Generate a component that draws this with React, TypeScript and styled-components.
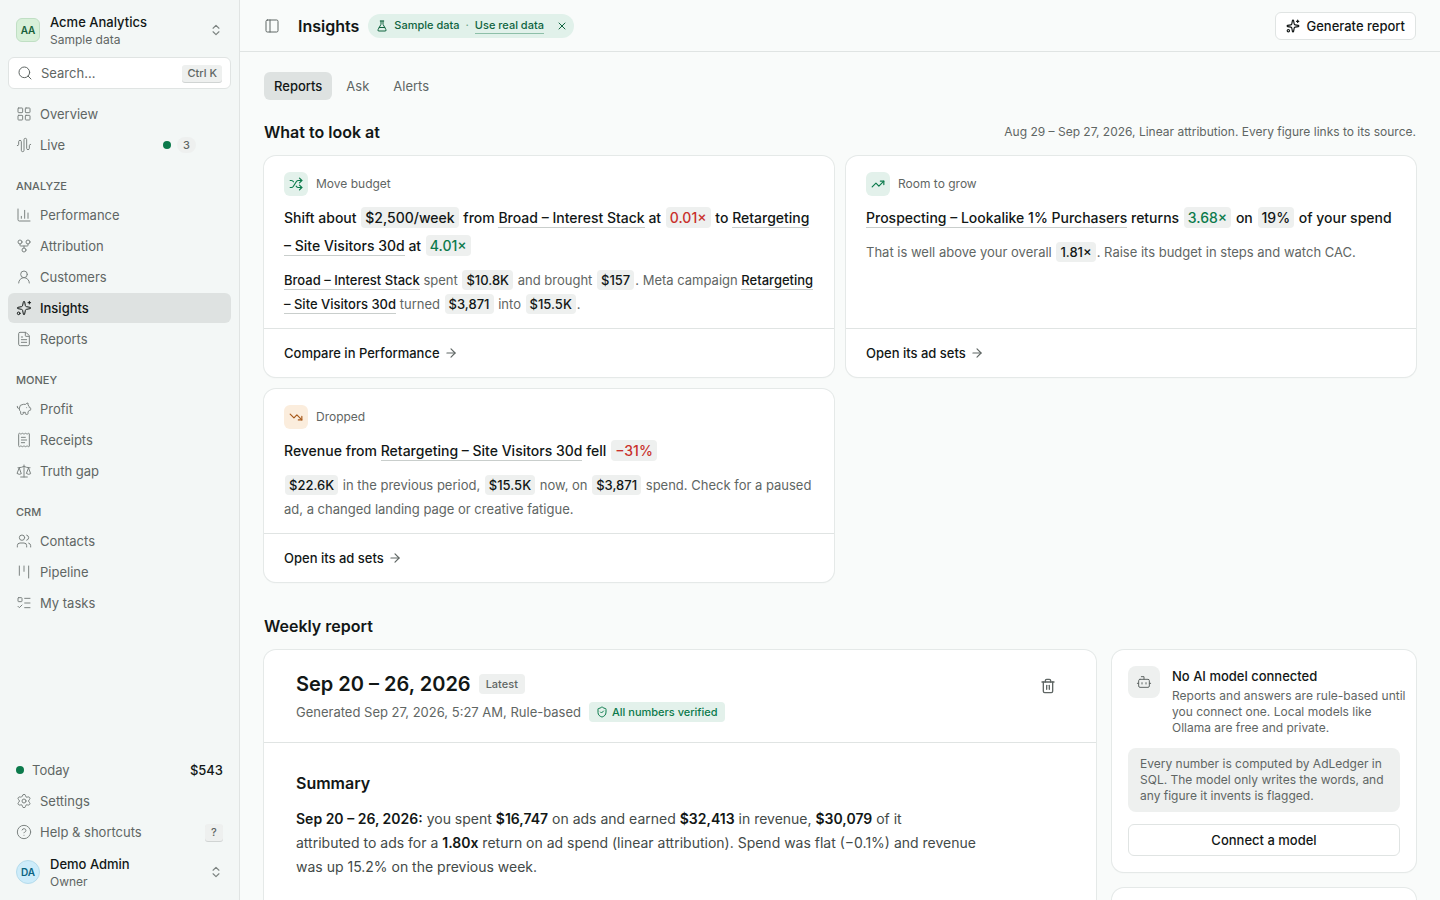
import React from "react";
import styled, { createGlobalStyle, css } from "styled-components";
import {
  ArrowRight, AudioWaveform, Bot, ChartColumn, ChevronsUpDown, CircleHelp, FileText, FlaskConical, GitFork,
  Kanban, LayoutGrid, ListTodo, PanelLeft, PiggyBank, ReceiptText, Scale, Search, Settings, ShieldCheck,
  Shuffle, Sparkles, Trash2, TrendingDown, TrendingUp, UserRound, Users, X,
} from "lucide-react";

const c = {
  bg: "#f9fbfa",
  side: "#f3f7f6",
  line: "#e0e4e3",
  active: "#dee2e1",
  chip: "#eef0ef",
  ink: "#121716",
  muted: "#5f6664",
  icon: "#7c8381",
  green: "#0b7a4b",
  greenSoft: "#e3f1eb",
  red: "#c9302c",
};

const Global = createGlobalStyle`
  *, *::before, *::after { box-sizing: border-box; }
  body { margin: 0; background: ${c.bg}; color: ${c.ink}; font: 400 13px/20px Inter, "Liberation Sans", sans-serif; }
  h1, h2, h3, p, ul { margin: 0; padding: 0; }
  ul { list-style: none; }
  a { color: inherit; text-decoration: none; }
  button, input { font: inherit; color: inherit; }
  button { border: 0; background: none; padding: 0; cursor: pointer; }
  svg { flex: none; display: block; }
`;

const Shell = styled.div`
  display: grid;
  grid-template-columns: 240px minmax(0, 1fr);
  height: 100vh;
  overflow: hidden;
`;

const Sidebar = styled.aside`
  display: flex;
  flex-direction: column;
  padding: 8px;
  background: ${c.side};
  border-right: 1px solid ${c.line};
`;

const Account = styled.button<{ $height: number }>`
  display: flex;
  align-items: center;
  gap: 10px;
  height: ${(p) => p.$height}px;
  padding: 0 8px;
  text-align: left;
  > svg { color: ${c.icon}; }
`;

const Avatar = styled.span<{ $round?: boolean }>`
  display: grid;
  place-items: center;
  width: 24px;
  height: 24px;
  font-size: 10px;
  font-weight: 600;
  border: 1px solid ${(p) => (p.$round ? "#b5dcec" : "#c0dfc4")};
  border-radius: ${(p) => (p.$round ? "50%" : "6px")};
  background: ${(p) => (p.$round ? "#cdecfa" : "#d8f0d9")};
  color: ${(p) => (p.$round ? "#0b6482" : "#17603a")};
`;

const AccountText = styled.span`
  flex: 1;
  display: flex;
  flex-direction: column;
  padding-top: 2px;
  line-height: 18px;
  strong { font-weight: 500; }
  small { font-size: 12px; color: ${c.muted}; }
`;

const SearchBox = styled.label`
  display: flex;
  align-items: center;
  gap: 8px;
  height: 32px;
  margin: 5px 0 10px;
  padding: 0 8px;
  border: 1px solid ${c.line};
  border-radius: 6px;
  background: #fff;
  color: ${c.muted};
  input {
    flex: 1;
    min-width: 0;
    padding: 0;
    border: 0;
    outline: 0;
    background: none;
    &::placeholder { color: ${c.muted}; opacity: 1; }
  }
`;

const Kbd = styled.kbd`
  display: grid;
  place-items: center;
  height: 17px;
  min-width: 18px;
  padding: 0 5px;
  border-radius: 3px;
  background: ${c.chip};
  box-shadow: 0 1px 0 #d0d4d3;
  font: 500 11px/16px Inter, sans-serif;
  color: ${c.muted};
`;

const NavGroup = styled.ul`
  display: flex;
  flex-direction: column;
  gap: 1px;
`;

const NavLabel = styled.h2`
  height: 28px;
  margin-top: 12px;
  padding: 0 8px;
  font-size: 11px;
  font-weight: 500;
  line-height: 28px;
  color: ${c.muted};
  text-transform: uppercase;
`;

const NavItem = styled.a<{ $active?: boolean }>`
  display: flex;
  align-items: center;
  gap: 8px;
  height: 30px;
  padding: 0 8px;
  border-radius: 6px;
  color: ${c.muted};
  > svg { color: ${c.icon}; }
  ${(p) => p.$active && css`
    background: ${c.active};
    color: ${c.ink};
    font-weight: 500;
    > svg { color: ${c.ink}; }
  `}
`;

const NavText = styled.span`
  flex: 1;
  padding-bottom: 1px;
`;

const Dot = styled.span`
  width: 8px;
  height: 8px;
  border-radius: 50%;
  background: ${c.green};
`;

const Count = styled.span`
  height: 16px;
  margin: 0 27px 0 -2px;
  padding: 0 6px;
  border-radius: 8px;
  background: ${c.chip};
  font-size: 11px;
  font-weight: 500;
  line-height: 16px;
`;

const Amount = styled.span`
  font-weight: 500;
  color: ${c.ink};
`;

const Foot = styled.div`
  margin-top: auto;
  margin-bottom: 5px;
`;

const Main = styled.main`
  display: flex;
  flex-direction: column;
  min-width: 0;
  min-height: 0;
`;

const TopBar = styled.header`
  flex: none;
  display: flex;
  align-items: center;
  height: 52px;
  padding: 0 24px;
  border-bottom: 1px solid ${c.line};
`;

const IconButton = styled.button<{ $size: number }>`
  flex: none;
  display: grid;
  place-items: center;
  width: ${(p) => p.$size}px;
  height: ${(p) => p.$size}px;
  color: ${c.muted};
`;

const PageTitle = styled.h1`
  margin: 0 9px 0 18px;
  font-size: 16px;
  font-weight: 600;
  line-height: 24px;
`;

const SamplePill = styled.div`
  display: flex;
  align-items: center;
  gap: 6px;
  height: 24px;
  padding: 0 4px 0 8px;
  border-radius: 12px;
  background: #e1f1ea;
  color: #10643f;
  font-size: 11px;
  font-weight: 500;
  line-height: 15px;
  a { border-bottom: 1px solid #8dbfa8; }
  button { color: inherit; margin-left: 4px; }
`;

const Separator = styled.span`
  color: #6fa88d;
`;

const OutlineButton = styled.button`
  display: flex;
  align-items: center;
  justify-content: center;
  gap: 6px;
  height: 28px;
  padding: 0 10px;
  border: 1px solid ${c.line};
  border-radius: 6px;
  background: #fff;
  font-weight: 500;
`;

const GenerateButton = styled(OutlineButton)`
  margin-left: auto;
`;

const ConnectButton = styled(OutlineButton)`
  width: 100%;
  height: 32px;
`;

const Content = styled.div`
  flex: 1;
  min-height: 0;
  overflow: hidden;
  padding: 20px 24px;
`;

const Tabs = styled.div`
  display: flex;
  gap: 4px;
`;

const Tab = styled.button<{ $active?: boolean }>`
  height: 28px;
  padding: 0 10px;
  border-radius: 6px;
  background: ${(p) => (p.$active ? c.active : "transparent")};
  color: ${(p) => (p.$active ? c.ink : c.muted)};
  font-weight: ${(p) => (p.$active ? 500 : 400)};
`;

const SectionHead = styled.div<{ $top: number }>`
  display: flex;
  align-items: center;
  justify-content: space-between;
  margin: ${(p) => p.$top}px 0 12px;
  h2 { font-size: 16px; font-weight: 600; line-height: 24px; }
  p { font-size: 12px; color: ${c.muted}; }
`;

const card = css`
  border-radius: 12px;
  background: #fff;
  box-shadow: 0 0 0 1px #e5e9e8, 0 1px 2px rgba(18, 23, 22, 0.06);
`;

const CardGrid = styled.div`
  display: grid;
  grid-template-columns: repeat(2, minmax(0, 1fr));
  gap: 12px;
`;

const InsightCard = styled.article`
  ${card}
  display: flex;
  flex-direction: column;
`;

const InsightBody = styled.div`
  flex: 1;
  display: flex;
  flex-direction: column;
  gap: 8px;
  padding: 16px 20px 12px;
`;

const Kind = styled.div<{ $warm?: boolean }>`
  display: flex;
  align-items: center;
  gap: 8px;
  font-size: 12px;
  color: ${c.muted};
  span {
    display: grid;
    place-items: center;
    width: 24px;
    height: 24px;
    border-radius: 6px;
    background: ${(p) => (p.$warm ? "#fbeddd" : c.greenSoft)};
    color: ${(p) => (p.$warm ? "#a85a1c" : c.green)};
  }
`;

const Headline = styled.h3`
  font-size: 14px;
  font-weight: 500;
  line-height: 28px;
`;

const Detail = styled.p`
  line-height: 24px;
  color: ${c.muted};
`;

const Figure = styled.span<{ $tone?: "good" | "bad" }>`
  margin: 0 1px;
  padding: 2px 4px;
  border-radius: 4px;
  background: ${c.chip};
  font-weight: 500;
  white-space: nowrap;
  color: ${(p) => (p.$tone === "good" ? c.green : p.$tone === "bad" ? c.red : c.ink)};
`;

const Source = styled.a`
  padding-bottom: 1px;
  border-bottom: 1px solid #c9cecc;
  color: ${c.ink};
  font-weight: 500;
`;

const CardLink = styled.a`
  display: flex;
  align-items: center;
  gap: 4px;
  height: 49px;
  padding: 0 20px;
  border-top: 1px solid ${c.line};
  font-weight: 500;
  svg { color: ${c.muted}; }
`;

const ReportGrid = styled.div`
  display: grid;
  grid-template-columns: minmax(0, 1fr) 304px;
  gap: 16px;
`;

const Report = styled.article`
  ${card}
  min-height: 400px;
`;

const ReportHead = styled.header`
  display: flex;
  justify-content: space-between;
  padding: 20px 32px;
  border-bottom: 1px solid ${c.line};
`;

const ReportTitle = styled.div`
  display: flex;
  align-items: center;
  gap: 8px;
  margin-bottom: 4px;
  h2 { font-size: 20px; font-weight: 600; line-height: 28px; }
`;

const ReportMeta = styled.div`
  display: flex;
  align-items: center;
  gap: 8px;
  color: ${c.muted};
  font-size: 13px;
`;

const Badge = styled.span<{ $good?: boolean }>`
  display: flex;
  align-items: center;
  gap: 4px;
  height: 20px;
  padding: 0 7px;
  border-radius: 4px;
  font-size: 11px;
  font-weight: 500;
  background: ${(p) => (p.$good ? c.greenSoft : c.chip)};
  color: ${(p) => (p.$good ? c.green : c.muted)};
`;

const ReportBody = styled.section`
  padding: 28px 32px;
  h3 { margin-bottom: 12px; font-size: 16px; font-weight: 600; line-height: 24px; }
  p { max-width: 690px; font-size: 14px; line-height: 24px; color: #434a48; }
  strong { font-weight: 600; color: ${c.ink}; }
`;

const Aside = styled.div`
  display: flex;
  flex-direction: column;
  gap: 16px;
`;

const AsideCard = styled.section`
  ${card}
  display: flex;
  flex-direction: column;
  gap: 12px;
  min-height: 80px;
  padding: 16px;
`;

const ModelInfo = styled.div`
  display: flex;
  gap: 12px;
  margin-right: -12px;
  h3 { margin-bottom: 2px; font-size: 13px; font-weight: 500; }
  p { font-size: 12px; line-height: 16px; color: ${c.muted}; }
`;

const ModelIcon = styled.span`
  flex: none;
  display: grid;
  place-items: center;
  width: 32px;
  height: 32px;
  border-radius: 8px;
  background: ${c.chip};
  color: ${c.muted};
`;

const Note = styled.p`
  padding: 8px 12px;
  border-radius: 8px;
  background: ${c.chip};
  color: ${c.muted};
  font-size: 12px;
  line-height: 16px;
`;

const stroke = { size: 16, strokeWidth: 1.5 };

const groups = [
  { label: "Analyze", items: [["Performance", ChartColumn], ["Attribution", GitFork], ["Customers", UserRound], ["Insights", Sparkles], ["Reports", FileText]] },
  { label: "Money", items: [["Profit", PiggyBank], ["Receipts", ReceiptText], ["Truth gap", Scale]] },
  { label: "CRM", items: [["Contacts", Users], ["Pipeline", Kanban], ["My tasks", ListTodo]] },
] as { label: string; items: [string, React.ElementType][] }[];

function Insight(props: { kind: string; icon: React.ReactNode; warm?: boolean; title: React.ReactNode; detail: React.ReactNode; link: string }) {
  return (
    <InsightCard>
      <InsightBody>
        <Kind $warm={props.warm}><span>{props.icon}</span>{props.kind}</Kind>
        <Headline>{props.title}</Headline>
        <Detail>{props.detail}</Detail>
      </InsightBody>
      <CardLink href="#">{props.link}<ArrowRight size={14} strokeWidth={2} /></CardLink>
    </InsightCard>
  );
}

export default function App() {
  return (
    <>
      <Global />
      <Shell>
        <Sidebar>
          <Account $height={44}>
            <Avatar>AA</Avatar>
            <AccountText><strong>Acme Analytics</strong><small>Sample data</small></AccountText>
            <ChevronsUpDown size={14} strokeWidth={2} />
          </Account>
          <SearchBox>
            <Search {...stroke} />
            <input type="text" placeholder="Search…" aria-label="Search" />
            <Kbd>Ctrl K</Kbd>
          </SearchBox>
          <nav>
            <NavGroup>
              <li><NavItem href="#"><LayoutGrid {...stroke} /><NavText>Overview</NavText></NavItem></li>
              <li><NavItem href="#"><AudioWaveform {...stroke} /><NavText>Live</NavText><Dot /><Count>3</Count></NavItem></li>
            </NavGroup>
            {groups.map((g) => (
              <React.Fragment key={g.label}>
                <NavLabel>{g.label}</NavLabel>
                <NavGroup>
                  {g.items.map(([name, Icon]) => (
                    <li key={name}>
                      <NavItem href="#" $active={name === "Insights"}><Icon {...stroke} /><NavText>{name}</NavText></NavItem>
                    </li>
                  ))}
                </NavGroup>
              </React.Fragment>
            ))}
          </nav>
          <Foot>
            <NavGroup>
              <li><NavItem href="#"><Dot /><NavText>Today</NavText><Amount>$543</Amount></NavItem></li>
              <li><NavItem href="#"><Settings {...stroke} /><NavText>Settings</NavText></NavItem></li>
              <li><NavItem href="#"><CircleHelp {...stroke} /><NavText>Help &amp; shortcuts</NavText><Kbd>?</Kbd></NavItem></li>
            </NavGroup>
          </Foot>
          <Account $height={40}>
            <Avatar $round>DA</Avatar>
            <AccountText><strong>Demo Admin</strong><small>Owner</small></AccountText>
            <ChevronsUpDown size={14} strokeWidth={2} />
          </Account>
        </Sidebar>
        <Main>
          <TopBar>
            <IconButton $size={16} aria-label="Toggle sidebar"><PanelLeft {...stroke} /></IconButton>
            <PageTitle>Insights</PageTitle>
            <SamplePill>
              <FlaskConical size={12} strokeWidth={2} />
              <span>Sample data</span>
              <Separator>·</Separator>
              <a href="#">Use real data</a>
              <IconButton $size={16} aria-label="Dismiss"><X size={12} strokeWidth={2} /></IconButton>
            </SamplePill>
            <GenerateButton><Sparkles size={14} strokeWidth={2} />Generate report</GenerateButton>
          </TopBar>
          <Content>
            <Tabs role="tablist">
              <Tab role="tab" aria-selected $active>Reports</Tab>
              <Tab role="tab">Ask</Tab>
              <Tab role="tab">Alerts</Tab>
            </Tabs>
            <SectionHead $top={20}>
              <h2>What to look at</h2>
              <p>Aug 29 – Sep 27, 2026, Linear attribution. Every figure links to its source.</p>
            </SectionHead>
            <CardGrid>
              <Insight
                kind="Move budget"
                icon={<Shuffle size={14} strokeWidth={2} />}
                title={<>Shift about <Figure>$2,500/week</Figure> from <Source href="#">Broad – Interest Stack</Source> at <Figure $tone="bad">0.01×</Figure> to <Source href="#">Retargeting – Site Visitors 30d</Source> at <Figure $tone="good">4.01×</Figure></>}
                detail={<><Source href="#">Broad – Interest Stack</Source> spent <Figure>$10.8K</Figure> and brought <Figure>$157</Figure>. Meta campaign <Source href="#">Retargeting – Site Visitors 30d</Source> turned <Figure>$3,871</Figure> into <Figure>$15.5K</Figure>.</>}
                link="Compare in Performance"
              />
              <Insight
                kind="Room to grow"
                icon={<TrendingUp size={14} strokeWidth={2} />}
                title={<><Source href="#">Prospecting – Lookalike 1% Purchasers</Source> returns <Figure $tone="good">3.68×</Figure> on <Figure>19%</Figure> of your spend</>}
                detail={<>That is well above your overall <Figure>1.81×</Figure>. Raise its budget in steps and watch CAC.</>}
                link="Open its ad sets"
              />
              <Insight
                kind="Dropped"
                warm
                icon={<TrendingDown size={14} strokeWidth={2} />}
                title={<>Revenue from <Source href="#">Retargeting – Site Visitors 30d</Source> fell <Figure $tone="bad">−31%</Figure></>}
                detail={<><Figure>$22.6K</Figure> in the previous period, <Figure>$15.5K</Figure> now, on <Figure>$3,871</Figure> spend. Check for a paused ad, a changed landing page or creative fatigue.</>}
                link="Open its ad sets"
              />
            </CardGrid>
            <SectionHead $top={32}><h2>Weekly report</h2></SectionHead>
            <ReportGrid>
              <Report>
                <ReportHead>
                  <div>
                    <ReportTitle><h2>Sep 20 – 26, 2026</h2><Badge>Latest</Badge></ReportTitle>
                    <ReportMeta>
                      Generated Sep 27, 2026, 5:27 AM, Rule-based
                      <Badge $good><ShieldCheck size={12} strokeWidth={2} />All numbers verified</Badge>
                    </ReportMeta>
                  </div>
                  <IconButton $size={32} aria-label="Delete report"><Trash2 size={16} strokeWidth={2} /></IconButton>
                </ReportHead>
                <ReportBody>
                  <h3>Summary</h3>
                  <p>
                    <strong>Sep 20 – 26, 2026:</strong> you spent <strong>$16,747</strong> on ads and earned <strong>$32,413</strong> in revenue, <strong>$30,079</strong> of it<br />
                    attributed to ads for a <strong>1.80x</strong> return on ad spend (linear attribution). Spend was flat (−0.1%) and revenue was up 15.2% on the previous week.
                  </p>
                </ReportBody>
              </Report>
              <Aside>
                <AsideCard>
                  <ModelInfo>
                    <ModelIcon><Bot {...stroke} /></ModelIcon>
                    <div>
                      <h3>No AI model connected</h3>
                      <p>Reports and answers are rule-based until<br />you connect one. Local models like<br />Ollama are free and private.</p>
                    </div>
                  </ModelInfo>
                  <Note>Every number is computed by AdLedger in SQL. The model only writes the words, and any figure it invents is flagged.</Note>
                  <ConnectButton>Connect a model</ConnectButton>
                </AsideCard>
                <AsideCard />
              </Aside>
            </ReportGrid>
          </Content>
        </Main>
      </Shell>
    </>
  );
}
